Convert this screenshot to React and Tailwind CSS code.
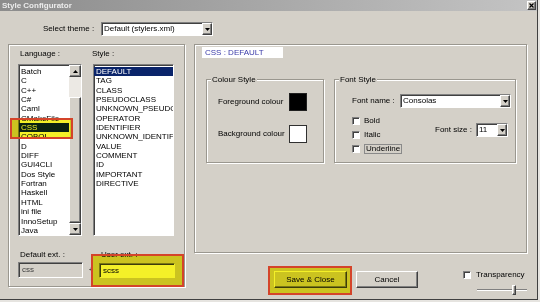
import React from "react";

const sunken =
  "border border-t-[#808080] border-l-[#808080] border-b-white border-r-white shadow-[inset_1px_1px_0_#404040]";
const raised =
  "border border-t-white border-l-white border-b-[#404040] border-r-[#404040] shadow-[inset_-1px_-1px_0_#808080]";
const etched =
  "border border-[#9a978f] shadow-[inset_1px_1px_0_#fff,1px_1px_0_#fff]";

function Arrow({ up }) {
  return (
    <svg width="5" height="3" viewBox="0 0 5 3">
      <path d={up ? "M0 3 L2.5 0 L5 3 Z" : "M0 0 L5 0 L2.5 3 Z"} fill="#000" />
    </svg>
  );
}

function Select({ value, className }) {
  return (
    <div className={`flex items-stretch bg-white ${sunken} ${className}`}>
      <div className="flex-1 pl-[2px] leading-[12px] text-black">{value}</div>
      <div className={`w-[10px] bg-[#d4d0c8] flex items-center justify-center ${raised}`}>
        <Arrow />
      </div>
    </div>
  );
}

function Check({ label, focus }) {
  return (
    <div className="flex items-center h-[8px] gap-[4px]">
      <div className={`w-[8px] h-[8px] bg-white ${sunken}`} />
      <span className={focus ? "border border-[#8a8a8a] px-[1px] leading-[8px]" : "leading-[8px]"}>{label}</span>
    </div>
  );
}

const languages = [
  "Batch", "C", "C++", "C#", "Caml", "CMakeFile", "CSS", "COBOL", "D", "DIFF",
  "GUI4CLI", "Dos Style", "Fortran", "Haskell", "HTML", "ini file", "InnoSetup", "Java",
];
const styles = [
  "DEFAULT", "TAG", "CLASS", "PSEUDOCLASS", "UNKNOWN_PSEUDOCLASS", "OPERATOR", "IDENTIFIER",
  "UNKNOWN_IDENTIFIER", "VALUE", "COMMENT", "ID", "IMPORTANT", "DIRECTIVE",
];

export default function App() {
  return (
    <div className="relative w-[540px] h-[302px] bg-[#e6e4e0] overflow-hidden font-['Liberation_Sans',Arial,sans-serif] text-[8px] text-black">
      <div className="w-[538px] h-[300px] bg-[#d4d0c8] border-r border-b border-[#404040] flex flex-col">
        {/* Title bar */}
        <div className="h-[11px] bg-gradient-to-r from-[#8c8c8c] via-[#a8a8a8] to-[#c4c4c4] flex items-center justify-between pl-[2px] pr-[1px]">
          <span className="font-bold text-[#ececec] leading-[11px]">Style Configurator</span>
          <div className={`w-[9px] h-[9px] bg-[#d4d0c8] flex items-center justify-center ${raised}`}>
            <svg width="5" height="5" viewBox="0 0 5 5">
              <path d="M0.5 0.5 L4.5 4.5 M4.5 0.5 L0.5 4.5" stroke="#000" strokeWidth="1.2" />
            </svg>
          </div>
        </div>

        {/* Theme row */}
        <div className="h-[33px] flex items-start pt-[11px] pl-[43px]">
          <span className="w-[58px] leading-[14px]">Select theme :</span>
          <Select value="Default (stylers.xml)" className="w-[112px] h-[14px]" />
        </div>

        {/* Main */}
        <div className="flex pl-[8px]">
          {/* Left group */}
          <div className={`w-[177px] h-[243px] ${etched} pl-[9px] pt-[4px]`}>
            <div className="flex h-[10px] leading-[10px]">
              <span className="ml-[2px] w-[72px]">Language :</span>
              <span>Style :</span>
            </div>
            <div className="flex mt-[5px]">
              <div className={`w-[64px] h-[172px] bg-white ${sunken} flex`}>
                <div className="flex-1 pt-[2px] pl-[2px] overflow-hidden">
                  {languages.map((l) => (
                    <div
                      key={l}
                      className={`h-[9.35px] leading-[9.35px] whitespace-nowrap ${l === "CSS" ? "bg-[#0a246a] text-white -ml-[2px] pl-[2px]" : ""}`}
                    >
                      {l}
                    </div>
                  ))}
                </div>
                <div className="w-[12px] flex flex-col bg-[#ece9e4]">
                  <div className={`h-[12px] bg-[#d4d0c8] flex items-center justify-center ${raised}`}>
                    <Arrow up />
                  </div>
                  <div className="h-[20px]" />
                  <div className={`flex-1 bg-[#d4d0c8] ${raised}`} />
                  <div className={`h-[12px] bg-[#d4d0c8] flex items-center justify-center ${raised}`}>
                    <Arrow />
                  </div>
                </div>
              </div>
              <div className={`ml-[11px] w-[81px] h-[172px] bg-white ${sunken} pt-[2px] overflow-hidden`}>
                {styles.map((s) => (
                  <div
                    key={s}
                    className={`h-[9.35px] leading-[9.35px] pl-[2px] whitespace-nowrap ${s === "DEFAULT" ? "bg-[#0a246a] text-white" : ""}`}
                  >
                    {s}
                  </div>
                ))}
              </div>
            </div>
            <div className="flex mt-[14px] h-[10px] leading-[10px]">
              <span className="ml-[2px] w-[81px]">Default ext. :</span>
              <span>User ext. :</span>
            </div>
            <div className="flex items-center mt-[2px]">
              <div className={`w-[65px] h-[16px] bg-[#d4d0c8] ${sunken} pl-[3px] leading-[14px] text-[#404040]`}>css</div>
              <span className="w-[16px] text-center">+</span>
              <div className={`w-[76px] h-[15px] bg-white ${sunken} pl-[3px] leading-[13px]`}>scss</div>
            </div>
          </div>

          {/* Right column */}
          <div className="ml-[9px] flex flex-col">
            <div className={`w-[333px] h-[209px] ${etched} pl-[7px] pt-[2px]`}>
              <div className="w-[81px] h-[11px] bg-white pl-[3px] leading-[11px] text-[#3a3aa8]">CSS : DEFAULT</div>
              <div className="flex mt-[21px] ml-[4px]">
                {/* Colour Style */}
                <div className={`relative w-[118px] h-[84px] ${etched} pt-[13px] pl-[11px]`}>
                  <span className="absolute -top-[5px] left-[4px] bg-[#d4d0c8] px-[1px] leading-[10px]">Colour Style</span>
                  <div className="flex items-center">
                    <span className="w-[71px]">Foreground colour</span>
                    <div className="w-[18px] h-[18px] bg-black border border-[#202020]" />
                  </div>
                  <div className="flex items-center mt-[14px]">
                    <span className="w-[71px]">Background colour</span>
                    <div className="w-[18px] h-[18px] bg-white border border-[#303030]" />
                  </div>
                </div>
                {/* Font Style */}
                <div className={`relative ml-[10px] w-[182px] h-[84px] ${etched} pt-[14px] pl-[17px]`}>
                  <span className="absolute -top-[5px] left-[4px] bg-[#d4d0c8] px-[1px] leading-[10px]">Font Style</span>
                  <div className="flex items-center">
                    <span className="w-[48px]">Font name :</span>
                    <Select value="Consolas" className="w-[111px] h-[14px]" />
                  </div>
                  <div className="flex mt-[9px]">
                    <div className="w-[83px] flex flex-col gap-[6px]">
                      <Check label="Bold" />
                      <Check label="Italic" />
                      <Check label="Underline" focus />
                    </div>
                    <div className="flex items-center mt-[6px] h-[14px]">
                      <span className="w-[41px]">Font size :</span>
                      <Select value="11" className="w-[32px] h-[14px]" />
                    </div>
                  </div>
                </div>
              </div>
            </div>

            {/* Buttons row */}
            <div className="flex mt-[18px]">
              <div className={`ml-[80px] w-[73px] h-[17px] bg-[#d4d0c8] ${raised} flex items-center justify-center`}>Save &amp; Close</div>
              <div className={`ml-[9px] w-[62px] h-[17px] bg-[#d4d0c8] ${raised} flex items-center justify-center`}>Cancel</div>
              <div className="ml-[45px] flex flex-col">
                <div className="flex items-center gap-[5px] h-[8px]">
                  <div className={`w-[8px] h-[8px] bg-white ${sunken}`} />
                  <span className="leading-[8px]">Transparency</span>
                </div>
                <div className="relative ml-[14px] mt-[6px] w-[50px] h-[10px] flex items-center">
                  <div className="w-full h-[2px] border-t border-[#808080] border-b border-b-white" />
                  <div className={`absolute left-[35px] top-0 w-[4px] h-[10px] bg-[#d4d0c8] ${raised}`} />
                </div>
              </div>
            </div>
          </div>
        </div>
      </div>

      {/* Highlighter overlays */}
      <div className="absolute left-[10px] top-[118px] w-[63px] h-[21px] border-2 border-[#d4442a]">
        <div className="w-full h-full bg-[#f4f028] mix-blend-multiply" />
      </div>
      <div className="absolute left-[91px] top-[254px] w-[93px] h-[33px] border-2 border-[#d4442a]">
        <div className="w-full h-full bg-[#f4f028] mix-blend-multiply" />
      </div>
      <div className="absolute left-[268px] top-[266px] w-[84px] h-[29px] border-2 border-[#d4442a]">
        <div className="w-full h-full bg-[#f4f028] mix-blend-multiply" />
      </div>
    </div>
  );
}
